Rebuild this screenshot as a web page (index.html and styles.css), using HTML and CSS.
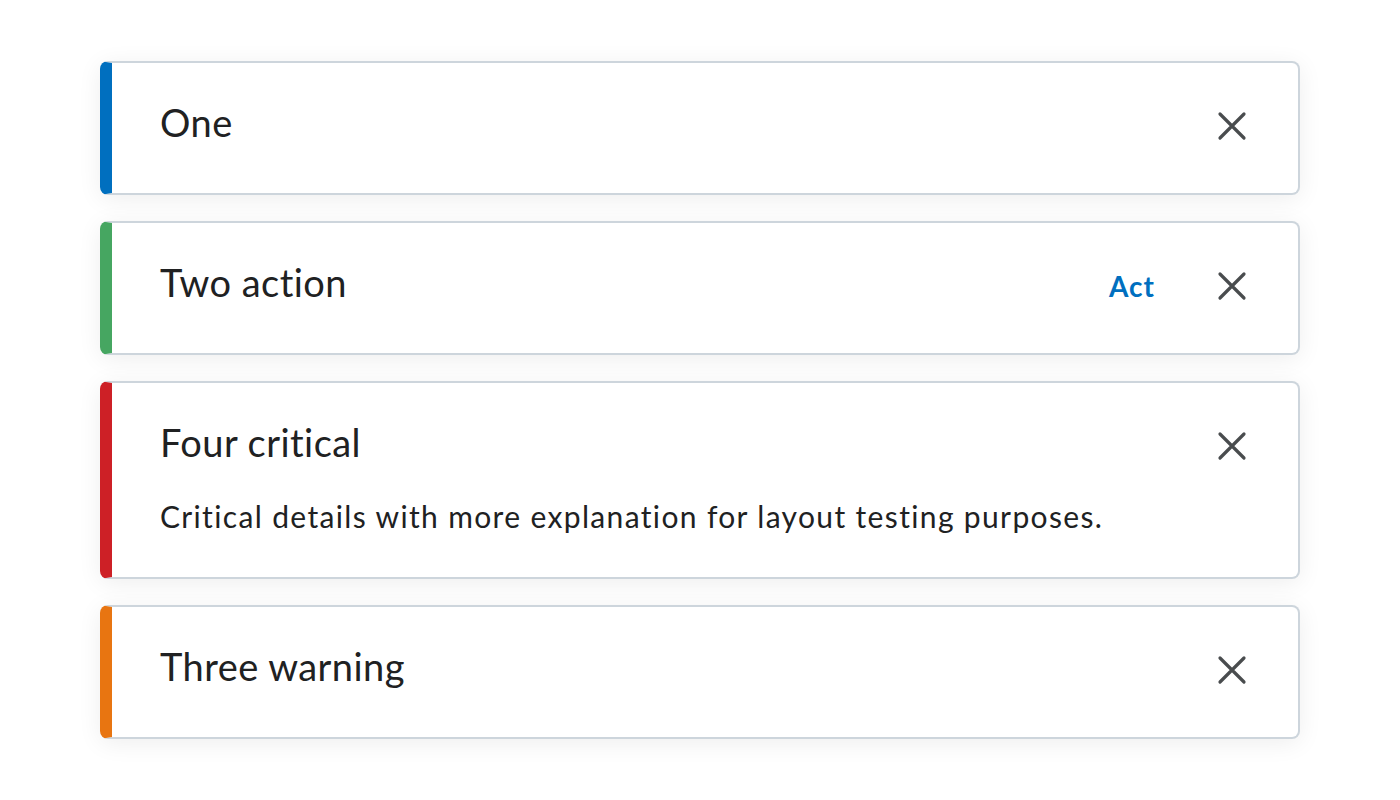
FILE: index.html
```html
<!DOCTYPE html>
<html>
<head>
<meta charset="utf-8">
<link rel="stylesheet" href="styles.css">
</head>
<body>
<div class="stack">
  <div class="alert alert-info">
    <div class="body">
      <div class="title">One</div>
    </div>
    <button class="close" aria-label="Close"><svg viewBox="0 0 32 32" width="32" height="32"><path d="M4 4L28 28M28 4L4 28" stroke="#494c4e" stroke-width="3.2" stroke-linecap="round" fill="none"/></svg></button>
  </div>
  <div class="alert alert-success">
    <div class="body">
      <div class="title">Two action</div>
    </div>
    <button class="action">Act</button>
    <button class="close" aria-label="Close"><svg viewBox="0 0 32 32" width="32" height="32"><path d="M4 4L28 28M28 4L4 28" stroke="#494c4e" stroke-width="3.2" stroke-linecap="round" fill="none"/></svg></button>
  </div>
  <div class="alert alert-critical">
    <div class="body">
      <div class="title">Four critical</div>
      <div class="desc">Critical details with more explanation for layout testing purposes.</div>
    </div>
    <button class="close" aria-label="Close"><svg viewBox="0 0 32 32" width="32" height="32"><path d="M4 4L28 28M28 4L4 28" stroke="#494c4e" stroke-width="3.2" stroke-linecap="round" fill="none"/></svg></button>
  </div>
  <div class="alert alert-warning">
    <div class="body">
      <div class="title">Three warning</div>
    </div>
    <button class="close" aria-label="Close"><svg viewBox="0 0 32 32" width="32" height="32"><path d="M4 4L28 28M28 4L4 28" stroke="#494c4e" stroke-width="3.2" stroke-linecap="round" fill="none"/></svg></button>
  </div>
</div>
</body>
</html>
```
FILE: styles.css
```css
html, body {
  margin: 0;
  padding: 0;
  background: #ffffff;
  font-family: Lato, "Noto Sans", sans-serif;
  color: #202122;
}
.stack {
  display: flex;
  flex-direction: column;
  gap: 26px;
  padding: 61px 100px;
  width: 1200px;
}
.alert {
  display: flex;
  align-items: flex-start;
  background: #fff;
  border: 2px solid #cdd5dc;
  border-left: 12px solid;
  border-radius: 8px;
  box-shadow: 0 4px 24px rgba(0, 0, 0, 0.07);
  box-sizing: border-box;
  min-height: 134px;
}
.alert-info { border-left-color: #006fbf; }
.alert-success { border-left-color: #46a661; }
.alert-critical { border-left-color: #cd2026; }
.alert-warning { border-left-color: #e87511; }
.body {
  flex: 1;
  padding: 37px 0 41px 48px;
}
.title {
  font-size: 38px;
  line-height: 44px;
  letter-spacing: 0.45px;
}
.desc {
  font-size: 30px;
  line-height: 40px;
  letter-spacing: 1.35px;
  margin-top: 32px;
}
.action {
  background: none;
  border: 0;
  font-family: inherit;
  font-weight: 700;
  font-size: 28px;
  letter-spacing: 1px;
  color: #006fbf;
  margin-top: 46px;
  padding: 0;
  margin-right: 61px;
}
.close {
  background: none;
  border: 0;
  padding: 0;
  width: 32px;
  height: 32px;
  margin: 47px 50px 0 0;
}
.close svg { display: block; }
```
